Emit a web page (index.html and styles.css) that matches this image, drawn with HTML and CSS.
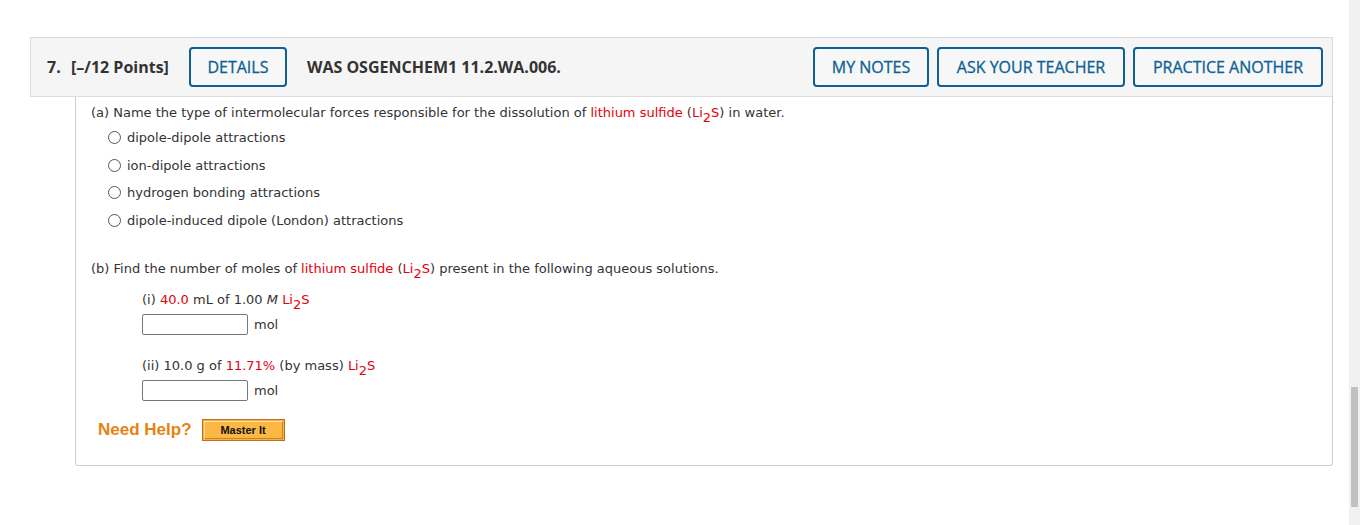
FILE: index.html
```html
<!DOCTYPE html>
<html>
<head>
<meta charset="utf-8">
<link rel="stylesheet" href="styles.css">
</head>
<body>
<div class="page">
  <div class="q-header">
    <span class="q-num">7.</span>
    <span class="q-points">[–/12 Points]</span>
    <button class="hbtn details">DETAILS</button>
    <span class="q-code">WAS OSGENCHEM1 11.2.WA.006.</span>
    <div class="hright">
      <button class="hbtn">MY NOTES</button>
      <button class="hbtn">ASK YOUR TEACHER</button>
      <button class="hbtn">PRACTICE ANOTHER</button>
    </div>
  </div>
  <div class="q-body">
    <p class="part part-a">(a) Name the type of intermolecular forces responsible for the dissolution of <span class="red">lithium sulfide</span> (<span class="red">Li<sub>2</sub>S</span>) in water.</p>
    <ul class="choices">
      <li><span class="radio"></span>dipole-dipole attractions</li>
      <li><span class="radio"></span>ion-dipole attractions</li>
      <li><span class="radio"></span>hydrogen bonding attractions</li>
      <li><span class="radio"></span>dipole-induced dipole (London) attractions</li>
    </ul>
    <p class="part part-b">(b) Find the number of moles of <span class="red">lithium sulfide</span> (<span class="red">Li<sub>2</sub>S</span>) present in the following aqueous solutions.</p>
    <div class="sub">
      <p class="sub-q">(i) <span class="red">40.0</span> mL of 1.00 <i>M</i> <span class="red">Li<sub>2</sub>S</span></p>
      <div class="answer"><span class="field"></span><span class="unit">mol</span></div>
    </div>
    <div class="sub sub2">
      <p class="sub-q">(ii) 10.0 g of <span class="red">11.71%</span> (by mass) <span class="red">Li<sub>2</sub>S</span></p>
      <div class="answer"><span class="field"></span><span class="unit">mol</span></div>
    </div>
    <div class="help">
      <span class="need">Need Help?</span>
      <span class="master"><span class="master-in">Master It</span></span>
    </div>
  </div>
</div>
<div class="scrollbar"><div class="thumb"></div></div>
</body>
</html>
```
FILE: styles.css
```css
html, body {
  margin: 0;
  padding: 0;
  background: #fff;
}
body {
  width: 1360px;
  height: 525px;
  overflow: hidden;
}
.page {
  padding: 37px 0 0 30px;
  width: 1303px;
}
.q-header {
  box-sizing: border-box;
  height: 60px;
  background: #f5f5f5;
  border: 1px solid #dcdcdc;
  display: flex;
  align-items: center;
  padding: 0 9px 0 16px;
  font-family: "Open Sans", sans-serif;
  color: #333;
}
.q-num {
  font-weight: 700;
  font-size: 16px;
  width: 24px;
}
.q-points {
  font-weight: 700;
  font-size: 16px;
  margin-right: 20px;
}
.hbtn {
  box-sizing: border-box;
  height: 40px;
  border: 2px solid #0d5f95;
  border-radius: 4px;
  background: #f7f7f7;
  color: #0d5f95;
  font-family: "Open Sans", sans-serif;
  font-size: 16px;
  font-weight: 500;
  padding: 0 16px;
  -webkit-text-stroke: 0.3px #0d5f95;
}
.details {
  width: 98px;
  padding: 0;
}
.q-code {
  font-weight: 700;
  font-size: 16px;
  margin-left: 20px;
}
.hright {
  margin-left: auto;
  display: flex;
  gap: 8px;
}
.hright .hbtn:nth-child(1) { width: 116px; padding: 0; }
.hright .hbtn:nth-child(2) { width: 188px; padding: 0; }
.hright .hbtn:nth-child(3) { width: 190px; padding: 0; }

.q-body {
  box-sizing: border-box;
  margin-left: 45px;
  height: 369px;
  border: 1px solid #cfcfcf;
  border-top: none;
  border-radius: 0 0 3px 3px;
  padding: 7px 0 0 15px;
  font-family: "DejaVu Sans", Verdana, sans-serif;
  font-size: 13px;
  color: #333;
}
.red { color: #e5000b; }
sub {
  font-size: 13px;
  vertical-align: -5px;
  line-height: 0;
}
p { margin: 0; }
.part {
  line-height: 18px;
}
.choices {
  list-style: none;
  margin: 7px 0 0 0;
  padding: 0 0 0 17px;
}
.choices li {
  height: 27.6px;
  line-height: 17px;
  display: flex;
  align-items: flex-start;
}
.radio {
  box-sizing: border-box;
  width: 13px;
  height: 13px;
  border: 1px solid #555;
  border-radius: 50%;
  margin: 2px 6px 0 0;
  background: #fff;
}
.part-b {
  margin-top: 21px;
}
.sub {
  padding-left: 51px;
  margin-top: 13px;
}
.sub-q {
  line-height: 18px;
}
.answer {
  margin-top: 5px;
  display: flex;
  align-items: center;
  height: 21px;
}
.field {
  box-sizing: border-box;
  width: 106px;
  height: 21px;
  border: 1px solid #767676;
  border-radius: 2px;
  background: #fff;
}
.unit {
  margin-left: 6px;
  font-family: "DejaVu Sans", Verdana, sans-serif;
}
.sub2 {
  margin-top: 22px;
}
.help {
  display: flex;
  align-items: center;
  margin-top: 18px;
  padding-left: 7px;
}
.need {
  font-family: "Liberation Sans", Arial, sans-serif;
  font-weight: 700;
  font-size: 17px;
  color: #e8820f;
  margin-right: 10px;
}
.master {
  box-sizing: border-box;
  width: 83px;
  height: 22px;
  border: 1px solid #b9711d;
  background: #fbb142;
  padding: 1px;
  display: flex;
}
.master-in {
  flex: 1;
  border: 1px solid #c9822a;
  border-top-color: #ffe3b0;
  border-left-color: #ffd79a;
  background: #fcb845;
  font-family: "Liberation Sans", Arial, sans-serif;
  font-weight: 700;
  font-size: 11px;
  color: #111;
  text-align: center;
  line-height: 16px;
}
.scrollbar {
  position: fixed;
  top: 0;
  right: 0;
  width: 11px;
  height: 525px;
  background: #f1f1f1;
}
.thumb {
  position: absolute;
  left: 2px;
  top: 387px;
  width: 7px;
  height: 120px;
  background: #c1c1c1;
}
```
